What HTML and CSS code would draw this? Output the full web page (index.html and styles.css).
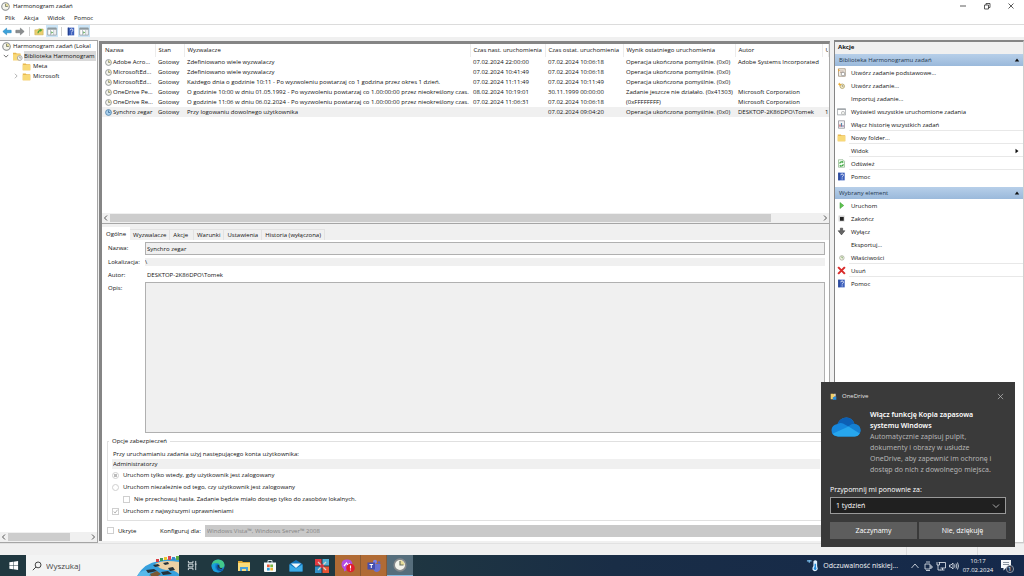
FILE: index.html
```html
<!DOCTYPE html>
<html lang="pl">
<head>
<meta charset="utf-8">
<title>Harmonogram zadań</title>
<link rel="stylesheet" href="styles.css">
</head>
<body>
<svg class="defs" aria-hidden="true">
  <symbol id="i-clock" viewBox="0 0 12 12"><circle cx="6" cy="6" r="5" fill="#f4f4ec" stroke="#85898c" stroke-width="1.4"/><path d="M6 6V2a4 4 0 0 1 4 4z" fill="#e6dc9a"/><path d="M6 2.500V6h3" fill="none" stroke="#66705f" stroke-width="1"/></symbol>
  <symbol id="i-clock-blue" viewBox="0 0 12 12"><circle cx="6" cy="6" r="5" fill="#a9d0ee" stroke="#4d7fa8" stroke-width="1.4"/><path d="M6 2.500V6h3" fill="none" stroke="#2b5f8c" stroke-width="1.2"/></symbol>
  <symbol id="i-folder" viewBox="0 0 12 12"><path d="M1 2h4l1 1h5v8H1z" fill="#e9b94d"/><path d="M1 4h10v7H1z" fill="#f8d978"/></symbol>
  <symbol id="i-folder-clock" viewBox="0 0 14 12"><path d="M1 1h4l1 1h5v9H1z" fill="#e9b94d"/><path d="M1 3h10v8H1z" fill="#f8d978"/><circle cx="10" cy="8" r="3.2" fill="#f4f4ee" stroke="#999"/><path d="M10 6v2h1.600" fill="none" stroke="#777" stroke-width=".8"/></symbol>
  <symbol id="i-help" viewBox="0 0 12 14"><path d="M1 1h10v12H1z" fill="#3c5fbc"/><path d="M1 1h2v12H1z" fill="#24408f"/><path d="M5 5q0-2 2-2t2 2q0 1-1 1.600T7 8.500M7 10v1.500" fill="none" stroke="#fff" stroke-width="1.3"/></symbol>
  <symbol id="i-panel" viewBox="0 0 14 12"><path d="M1 1h12v10H1z" fill="#fff" stroke="#8c9296"/><path d="M1 1h12v2.500H1z" fill="#8d999f"/><path d="M5 4v7M9.500 4v7" stroke="#9aa4aa"/><path d="m6 5.500 2.500 1.800L6 9z" fill="#4b9c43"/></symbol>
</svg>

<div class="window">
  <header class="titlebar">
    <svg class="ico"><use href="#i-clock"/></svg>
    <h1 class="title">Harmonogram zadań</h1>
    <div class="winbtns">
      <button aria-label="Minimalizuj"><svg viewBox="0 0 8 8"><path d="M1 4h6"/></svg></button>
      <button aria-label="Przywróć"><svg viewBox="0 0 8 8"><path d="M1.500 3h4v4h-4zM3 3V1.500h4v4H5.500"/></svg></button>
      <button aria-label="Zamknij"><svg viewBox="0 0 8 8"><path d="m1.500 1.500 5 5m0-5-5 5"/></svg></button>
    </div>
  </header>
  <nav class="menu">
    <button>Plik</button><button>Akcja</button><button>Widok</button><button>Pomoc</button>
  </nav>
  <div class="toolbar">
    <button aria-label="Wstecz"><svg viewBox="0 0 12 10"><path d="M1 5l4.500-4v2.500H11v3H5.500V9z" fill="#3aa2dc" stroke="#2382b8" stroke-width=".7"/></svg></button>
    <button aria-label="Dalej"><svg viewBox="0 0 12 10"><path d="M11 5 6.500 1v2.500H1v3h5.500V9z" fill="#8a8d8f" stroke="#6d7072" stroke-width=".7"/></svg></button>
    <span class="sep"></span>
    <button aria-label="W górę"><svg viewBox="0 0 12 10"><path d="M1 3h3l1-1h6v7H1z" fill="#ecd06f" stroke="#c3a444" stroke-width=".6"/><path d="M4 7q0-3 3-4L6.500 1.500 10 3 8 5.500 7.500 4.300Q6 5 5.500 7z" fill="#4fa43e"/></svg></button>
    <button class="on" aria-label="Drzewo konsoli"><svg><use href="#i-panel"/></svg></button>
    <span class="sep"></span>
    <button aria-label="Pomoc"><svg><use href="#i-help"/></svg></button>
    <button class="on" aria-label="Okienko akcji"><svg><use href="#i-panel"/></svg></button>
  </div>

  <main class="main">
    <aside class="tree">
      <ul class="nodes">
        <li class="node root"><svg class="ico"><use href="#i-clock"/></svg><span>Harmonogram zadań (Lokal</span></li>
        <li class="node lib"><svg class="chev" viewBox="0 0 8 8"><path d="m1 2.500 3 3 3-3"/></svg><svg class="ico"><use href="#i-folder-clock"/></svg><span class="picked">Biblioteka Harmonogram</span></li>
        <li class="node sub"><span class="chev"></span><svg class="ico"><use href="#i-folder"/></svg><span>Meta</span></li>
        <li class="node sub"><svg class="chev light" viewBox="0 0 8 8"><path d="m2.500 1 3 3-3 3"/></svg><svg class="ico"><use href="#i-folder"/></svg><span>Microsoft</span></li>
      </ul>
      <div class="hscroll"><svg viewBox="0 0 8 8"><path d="M5 1.500 2.500 4 5 6.500"/></svg><span class="track"><span class="thumb tree-thumb"></span></span><svg viewBox="0 0 8 8"><path d="M3 1.500 5.500 4 3 6.500"/></svg></div>
    </aside>

    <section class="center">
      <div class="list">
        <table class="tasks">
          <colgroup><col class="c-name"><col class="c-state"><col class="c-trig"><col class="c-next"><col class="c-last"><col class="c-res"><col class="c-auth"><col></colgroup>
          <thead><tr><th>Nazwa</th><th>Stan</th><th>Wyzwalacze</th><th>Czas nast. uruchomienia</th><th>Czas ostat. uruchomienia</th><th>Wynik ostatniego uruchomienia</th><th>Autor</th><th>U</th></tr></thead>
          <tbody>
            <tr><td><svg><use href="#i-clock"/></svg>Adobe Acro...</td><td>Gotowy</td><td>Zdefiniowano wiele wyzwalaczy</td><td>07.02.2024 22:00:00</td><td>07.02.2024 10:06:18</td><td>Operacja ukończona pomyślnie. (0x0)</td><td>Adobe Systems Incorporated</td><td></td></tr>
            <tr><td><svg><use href="#i-clock"/></svg>MicrosoftEd...</td><td>Gotowy</td><td>Zdefiniowano wiele wyzwalaczy</td><td>07.02.2024 10:41:49</td><td>07.02.2024 10:06:18</td><td>Operacja ukończona pomyślnie. (0x0)</td><td></td><td></td></tr>
            <tr><td><svg><use href="#i-clock"/></svg>MicrosoftEd...</td><td>Gotowy</td><td>Każdego dnia o godzinie 10:11 - Po wyzwoleniu powtarzaj co 1 godzina przez okres 1 dzień.</td><td>07.02.2024 11:11:49</td><td>07.02.2024 10:11:49</td><td>Operacja ukończona pomyślnie. (0x0)</td><td></td><td></td></tr>
            <tr><td><svg><use href="#i-clock"/></svg>OneDrive Pe...</td><td>Gotowy</td><td>O godzinie 10:00 w dniu 01.05.1992 - Po wyzwoleniu powtarzaj co 1.00:00:00 przez nieokreślony czas.</td><td>08.02.2024 10:19:01</td><td>30.11.1999 00:00:00</td><td>Zadanie jeszcze nie działało. (0x41303)</td><td>Microsoft Corporation</td><td></td></tr>
            <tr><td><svg><use href="#i-clock"/></svg>OneDrive Re...</td><td>Gotowy</td><td>O godzinie 11:06 w dniu 06.02.2024 - Po wyzwoleniu powtarzaj co 1.00:00:00 przez nieokreślony czas.</td><td>07.02.2024 11:06:31</td><td>07.02.2024 10:06:18</td><td>(0xFFFFFFFF)</td><td>Microsoft Corporation</td><td></td></tr>
            <tr class="sel"><td><svg><use href="#i-clock-blue"/></svg>Synchro zegar</td><td>Gotowy</td><td>Przy logowaniu dowolnego użytkownika</td><td></td><td>07.02.2024 09:04:20</td><td>Operacja ukończona pomyślnie. (0x0)</td><td>DESKTOP-2K86DPO\Tomek</td><td>1</td></tr>
          </tbody>
        </table>
        <div class="hscroll"><svg viewBox="0 0 8 8"><path d="M5 1.500 2.500 4 5 6.500"/></svg><span class="track"><span class="thumb list-thumb"></span></span><svg viewBox="0 0 8 8"><path d="M3 1.500 5.500 4 3 6.500"/></svg></div>
      </div>

      <div class="details">
        <div class="tabs" role="tablist">
          <button role="tab" class="tab active" aria-selected="true">Ogólne</button><button role="tab" class="tab">Wyzwalacze</button><button role="tab" class="tab wide">Akcje</button><button role="tab" class="tab">Warunki</button><button role="tab" class="tab">Ustawienia</button><button role="tab" class="tab">Historia (wyłączona)</button>
        </div>
        <form class="form">
          <div class="grid">
            <label for="name">Nazwa:</label><input id="name" class="boxed" value="Synchro zegar" readonly>
            <label for="loc">Lokalizacja:</label><input id="loc" class="strip" value="\" readonly>
            <label for="author">Autor:</label><input id="author" class="plain" value="DESKTOP-2K86DPO\Tomek" readonly>
            <label for="desc">Opis:</label><textarea id="desc" class="boxed desc" readonly></textarea>
          </div>
          <fieldset class="security">
            <legend>Opcje zabezpieczeń</legend>
            <label class="line" for="acct">Przy uruchamianiu zadania użyj następującego konta użytkownika:</label>
            <input id="acct" class="strip acct" value="Administratorzy" readonly>
            <label class="opt"><input type="radio" name="run" checked disabled>Uruchom tylko wtedy, gdy użytkownik jest zalogowany</label>
            <label class="opt"><input type="radio" name="run" disabled>Uruchom niezależnie od tego, czy użytkownik jest zalogowany</label>
            <label class="opt inset"><input type="checkbox" disabled>Nie przechowuj hasła. Zadanie będzie miało dostęp tylko do zasobów lokalnych.</label>
            <label class="opt"><span class="tick"><input type="checkbox" checked disabled><svg viewBox="0 0 8 8"><path d="m2 4 1.500 1.800L6.300 2"/></svg></span>Uruchom z najwyższymi uprawnieniami</label>
          </fieldset>
          <div class="config">
            <label class="opt hidden-opt"><input type="checkbox" disabled>Ukryte</label>
            <label for="cfg">Konfiguruj dla:</label>
            <select id="cfg" class="cfg" disabled><option>Windows Vista™, Windows Server™ 2008</option></select>
          </div>
        </form>
      </div>
    </section>

    <aside class="actions">
      <h2 class="actions-title">Akcje</h2>
      <button class="group">Biblioteka Harmonogramu zadań<svg viewBox="0 0 8 8"><path d="M1 6h6L4 2z"/></svg></button>
      <ul class="items">
        <li><button><svg viewBox="0 0 12 12"><path d="M2 1h9v10H2z" fill="#f3efe7" stroke="#9b8b76"/><path d="M4 4h5M4 6h5" stroke="#b59a88"/><circle cx="8" cy="8" r="2.500" fill="#fff" stroke="#888"/><path d="m1 1 3 2-2 2z" fill="#e5a33b"/></svg>Utwórz zadanie podstawowe...</button></li>
        <li><button><svg viewBox="0 0 12 12"><circle cx="7" cy="7" r="3" fill="#f5edc6" stroke="#a79a67"/><path d="M7 5.500V7h1.500" fill="none" stroke="#777"/><path d="m3 2 1 1.500L6 4 4.500 5.500 4 7 3 5.500 1.500 4.500z" fill="#edac31"/></svg>Utwórz zadanie...</button></li>
        <li><button><span class="blank"></span>Importuj zadanie...</button></li>
        <li><button><svg viewBox="0 0 12 12"><path d="M.5 2.500h11v8H.5z" fill="#fff" stroke="#969ca0"/><path d="M.5 3h11" stroke="#969ca0" stroke-width="1.500"/><circle cx="8" cy="8" r="2.200" fill="#edf0ed" stroke="#999" stroke-width=".7"/></svg>Wyświetl wszystkie uruchomione zadania</button></li>
        <li class="ruled"><button><svg viewBox="0 0 12 12"><path d="M2 1h8v10H2z" fill="#f2f2f4" stroke="#8f8c96"/><path d="M4 9V6" stroke="#c44" stroke-width="1.500"/><path d="M6 9V4" stroke="#58a" stroke-width="1.500"/><path d="M8 9V7" stroke="#84548a" stroke-width="1.500"/></svg>Włącz historię wszystkich zadań</button></li>
        <li class="ruled"><button><svg><use href="#i-folder"/></svg>Nowy folder...</button></li>
        <li class="ruled"><button><span class="blank"></span>Widok<svg class="more" viewBox="0 0 8 8"><path d="M2 1v6l4-3z"/></svg></button></li>
        <li class="ruled"><button><svg viewBox="0 0 12 12"><path d="M2 1h6l2 2v8H2z" fill="#f4fff2" stroke="#7aa578" stroke-width=".8"/><path d="M3.500 6q1-3 4-2M8.500 7q-1 3-4 2" fill="none" stroke="#38a13c" stroke-width="1.500"/><path d="m7 2 2 2-2 1.500zM5 7.500 3 9l2 1.800z" fill="#38a13c"/></svg>Odśwież</button></li>
        <li><button><svg><use href="#i-help"/></svg>Pomoc</button></li>
      </ul>
      <button class="group">Wybrany element<svg viewBox="0 0 8 8"><path d="M1 6h6L4 2z"/></svg></button>
      <ul class="items">
        <li><button><svg viewBox="0 0 12 12"><path d="M4 2v8l5-4z" fill="#62c552" stroke="#389b31" stroke-width=".7"/></svg>Uruchom</button></li>
        <li><button><svg viewBox="0 0 12 12"><path d="M2 2h8v8H2z" fill="#d5d5d5"/><path d="M4 4h5v5H4z" fill="#222"/></svg>Zakończ</button></li>
        <li><button><svg viewBox="0 0 12 12"><path d="M4.500 1.500h3V5h3L6 10.500 1.500 5h3z" fill="#666" stroke="#333" stroke-width=".7"/></svg>Wyłącz</button></li>
        <li><button><span class="blank"></span>Eksportuj...</button></li>
        <li class="ruled"><button><svg viewBox="0 0 12 12"><circle cx="6.500" cy="6.500" r="3" fill="#f7f8e8" stroke="#a1a596"/><path d="M6.500 4.500v2H8" fill="none" stroke="#6b9a56"/></svg>Właściwości</button></li>
        <li class="ruled"><button><svg viewBox="0 0 12 12"><path d="M1.500 1.500 10.500 10.500M10.500 1.500l-9 9" stroke="#d92b2b" stroke-width="2.800"/></svg>Usuń</button></li>
        <li><button><svg><use href="#i-help"/></svg>Pomoc</button></li>
      </ul>
    </aside>
  </main>
  <div class="status"><span></span><span></span><span></span></div>

  <footer class="taskbar">
    <button class="tb" aria-label="Start"><svg viewBox="0 0 12 12"><path d="M1.500 2.500 5.500 2v3.700h-4zM6 1.900l5-.7v4.500H6zM1.500 6.200h4V10l-4-.5zM6 6.200h5v4.600l-5-.7z" fill="#fff"/></svg></button>
    <label class="search">
      <svg class="lens" viewBox="0 0 12 12"><circle cx="7.300" cy="4.700" r="3.500"/><path d="M4.800 7.200 1 11"/></svg>
      <input type="text" placeholder="Wyszukaj" aria-label="Wyszukaj">
      <svg class="art" viewBox="0 0 42 20"><path d="M0 20Q7 7 22 5l10-2 10-1v18z" fill="#37a0dd"/><path d="M18 8q8-5 24-2v12q-6-5-13-4-7-1-11-6z" fill="#ecd1a5"/><path d="M2 17q7-5 12-2l-2 5H1z" fill="#58b9ea"/><path d="M9 14l8-1 3 2-9 2zM16 9l5-1 2 2-5 1zM26 7l5-1 1 2-4 1zM31 12l5-1 2 3-5 1zM24 16l7-1 4 3-9 1z" fill="#25323a"/><path d="M13 18l7-3 4 3-3 2h-7z" fill="#795934"/><path d="M19 6h3V3h-3z" fill="#d83c42"/><path d="M23 5h3V2h-3z" fill="#3b9b57"/><path d="M27 4h3V1h-3z" fill="#ecc42f"/><path d="M31 4h3V0h-3z" fill="#d94755"/><path d="M35 4h3V1h-3z" fill="#3587cc"/><path d="M39 4h3V0h-3z" fill="#5dad42"/></svg>
    </label>
    <button class="tb" aria-label="Widok zadań"><svg viewBox="0 0 12 12" fill="none" stroke="#dce4e6"><path d="M1.500 1v2h5V1M1.500 4.500h5v3h-5zM1.500 11V9h5v2M9.500 1v10M8.500 4.500h2"/></svg></button>
    <button class="tb" aria-label="Edge"><svg class="big" viewBox="0 0 14 14"><circle cx="7" cy="7" r="6.500" fill="#1683d0"/><path d="M.6 6.500Q1.500.5 7.200.5q6 .3 6.300 5.500 0 3-3.500 3-2 0-1.600-1.300Q9.500 4.700 6 4.300 2 4.200.6 6.500z" fill="#42c98b"/><path d="M.6 6.500Q2 4 5.500 4.300 3.500 6 4 8.500 5 12.300 9 13 1 14.500.6 6.500z" fill="#1aa1dc"/><path d="M5.500 7Q5 11.500 9.500 12q2 0 3.300-1.700-6 1.500-4.800-2.600Q8 5.500 6.500 5.500q-.8.500-1 1.500z" fill="#0d4e99"/><path d="M7 6q2 0 1.500 2 .3 1.300 3 .8l-1 1.400Q6.500 10 7 6z" fill="#1f3339"/></svg></button>
    <button class="tb" aria-label="Eksplorator plików"><svg class="big" viewBox="0 0 14 14"><path d="M1 2h4l1 1h7v9H1z" fill="#e5ac35"/><path d="M1 4h12v8H1z" fill="#fbdc7b"/><path d="M3 8h8v4H9V10H5v2H3z" fill="#4aa0d8"/></svg></button>
    <button class="tb" aria-label="Sklep"><svg class="big" viewBox="0 0 14 14"><path d="M5 4V1.500h4V4" fill="none" stroke="#d5e2e8"/><path d="M1 3.500h12V12q0 1-1 1H2q-1 0-1-1z" fill="#f6fafb"/><path d="M4 5.500h2.700v2.700H4z" fill="#eb5936"/><path d="M7.300 5.500H10v2.700H7.300z" fill="#77b943"/><path d="M4 8.800h2.700v2.700H4z" fill="#329fd9"/><path d="M7.300 8.800H10v2.700H7.300z" fill="#f0b735"/></svg></button>
    <button class="tb" aria-label="Poczta"><svg class="big" viewBox="0 0 14 14"><path d="M.5 5 7 1l6.500 4v7.500H.5z" fill="#1476bd"/><path d="M2 4.500h10L7 9z" fill="#f1f8fc"/><path d="M.5 5.500 7 9.500l6.500-4v7H.5z" fill="#3cace8"/></svg></button>
    <button class="tb" aria-label="Program"><svg class="big" viewBox="0 0 14 14"><path d="M0 0h6.500v6.500H0z" fill="#e2393f"/><path d="M7.500 0H14v6.500H7.500z" fill="#51aed3"/><path d="M0 7.500h6.500V14H0z" fill="#328fc8"/><path d="M7.500 7.500H14V14H7.500z" fill="#e95434"/><path d="m3 3 8 8M11 3l-8 8" stroke="#d9d6ca" stroke-width="1.200"/><circle cx="7" cy="7" r="2" fill="#cc3440"/></svg></button>
    <button class="tb orange" aria-label="Messenger"><svg class="big" viewBox="0 0 14 14"><path d="M6 .5q5.500 0 5.500 5.300T6 11l-3 1.500v-2.300Q.5 9 .5 5.800.500.5 6 .5z" fill="#b44de4"/><path d="m3 7 2.500-3L7 6l2-1.500" fill="none" stroke="#fff" stroke-width="1.200"/><circle cx="9.500" cy="9" r="4.300" fill="#e21e2f"/><path d="M9.500 6.500v3M9.500 10.500v1" stroke="#fff" stroke-width="1.100"/></svg></button>
    <button class="tb orange" aria-label="Teams"><svg class="big" viewBox="0 0 14 14"><circle cx="8" cy="2.700" r="2" fill="#7b83eb"/><circle cx="12" cy="3.500" r="1.300" fill="#5961c3"/><path d="M6 5h7.500v4q-.5 3.500-3.500 4-3.500 0-4-4z" fill="#6971d2"/><path d="M.5 3.500H8v7H.5z" fill="#444db0"/><path d="M2.500 5.500h3.600M4.300 5.500V9" stroke="#fff"/></svg></button>
    <button class="tb current" aria-label="Harmonogram zadań"><svg class="big"><use href="#i-clock"/></svg></button>
    <div class="tray">
      <button class="weather"><svg viewBox="0 0 14 14"><path d="M1 2h5M3.500 1v3" stroke="#79bceb" stroke-width="1.300"/><path d="M8 2.500q2-2.500 4 0v5q1.500 3-.5 5-3 1.500-4.500-1-.5-2 1-4z" fill="#dcefff"/><path d="M9.200 5h1.600v3.500q1.400 2-.3 3.300-2.500.2-2.300-2l1-1.300z" fill="#238bdc"/></svg>Odczuwalność niskiej...</button>
      <button aria-label="Ukryte ikony"><svg viewBox="0 0 10 10"><path d="m1.500 7 3.500-4 3.500 4"/></svg></button>
      <button aria-label="Kamera"><svg viewBox="0 0 10 10"><path d="M3 1h4M2 3h5v5H2zM7 5h2v2H7M3 9.500h4"/></svg></button>
      <button aria-label="Sieć"><svg viewBox="0 0 10 10"><path d="M2.500 1.500H9.500V7h-5M1 1v3h2.500V1M2 4v5h3M6.500 7v2M4.500 9h4"/></svg></button>
      <button aria-label="Głośność"><svg viewBox="0 0 10 10"><path d="M.5 4H2l2-2v6L2 6H.5zM5.500 3.500q1 1.500 0 3M7 2.500q1.700 2.500 0 5M8.500 1.500q2 3.500 0 7" stroke-width=".8"/></svg></button>
      <button class="time"><span>10:17</span><span>07.02.2024</span></button>
      <button class="note" aria-label="Powiadomienia"><svg viewBox="0 0 14 14"><path d="M1 1h10v8H6l-2.500 2.500V9H1z" fill="#f5f7fa" stroke="none"/><path d="M3 3.500h6M3 5.500h6" stroke="#6c7889" stroke-width=".8"/><circle cx="10" cy="10" r="3.600" fill="#26324b" stroke="#a4adb9" stroke-width=".8"/></svg><span class="count">1</span></button>
    </div>
  </footer>
</div>

<section class="toast" aria-label="OneDrive">
  <div class="toast-head"><svg viewBox="0 0 10 10"><path d="M1 1h4l1 1v7H1z" fill="#f2cf69"/><path d="M4 6l5-1v4.500H4z" fill="#2c8cd9"/><path d="M6 1h2v4H6z" fill="#f7f1de"/></svg><span>OneDrive</span><button aria-label="Zamknij"><svg viewBox="0 0 8 8"><path d="m1 1 6 6m0-6-6 6"/></svg></button></div>
  <div class="toast-body">
    <svg class="cloud" viewBox="0 0 30 20"><path d="M7 19.500Q.5 19 .5 13 .8 8 6.500 7 9 .5 15.500.5q6 .3 8 6.500 6 .8 6 6.500-.4 5.500-6 6z" fill="#1687dc"/><path d="M6.500 7Q9 .5 15.500.5q6 .3 8 6.500-3.500-.3-6 2.500L12 6.500Q9.500 5.500 6.500 7z" fill="#0c5fb4"/><path d="M17.500 9.500q2.500-2.800 6-2.500 6 .8 6 6.500 0 1.500-.8 3z" fill="#1580d2"/><path d="M7 19.500Q3 19 1.500 16.800L17.500 9.500l11.200 7q-1.500 3-5.200 3z" fill="#27a6ed"/></svg>
    <div class="copy"><h2>Włącz funkcję Kopia zapasowa systemu Windows</h2><p>Automatycznie zapisuj pulpit, dokumenty i obrazy w usłudze OneDrive, aby zapewnić im ochronę i dostęp do nich z dowolnego miejsca.</p></div>
  </div>
  <label class="remind" for="remind">Przypomnij mi ponownie za:</label>
  <div class="pick"><select id="remind"><option>1 tydzień</option></select><svg viewBox="0 0 8 8"><path d="m1 2.500 3 3 3-3"/></svg></div>
  <div class="toast-btns"><button>Zaczynamy</button><button>Nie, dziękuję</button></div>
</section>
</body>
</html>
```

FILE: styles.css
```css
* { box-sizing: border-box; }
body { margin: 0; font: 6px/10px "Open Sans", "Noto Sans", sans-serif; color: #111; background: #f0f0f0; overflow: hidden; }
button, input, select, textarea { font: inherit; color: inherit; border: 0; margin: 0; padding: 0; background: none; border-radius: 0; appearance: none; outline: 0; min-width: 0; text-align: left; }
button { display: flex; align-items: center; white-space: nowrap; }
ul { list-style: none; margin: 0; padding: 0; }
h1, h2, p { margin: 0; font-size: inherit; }
svg { flex: none; display: block; }
.defs { position: absolute; width: 0; height: 0; }
.window { display: flex; flex-direction: column; height: 100vh; }

.titlebar { display: flex; align-items: center; height: 12px; padding-left: 1px; gap: 3px; background: #fff; flex: none; }
.titlebar .ico { width: 9px; height: 9px; }
.title { font-weight: 400; }
.winbtns { display: flex; margin-left: auto; gap: 16px; padding-right: 9px; }
.winbtns svg { width: 8px; height: 8px; fill: none; stroke: #333; stroke-width: .8; }
.menu { display: flex; height: 13px; gap: 9px; padding-left: 5px; background: #fff; border-bottom: 1px solid #dcdcdc; flex: none; }
.toolbar { display: flex; align-items: center; height: 12px; gap: 1px; padding-left: 1px; background: #fff; flex: none; }
.toolbar button { width: 12px; height: 12px; justify-content: center; }
.toolbar svg { width: 10px; height: 9px; }
.toolbar .on { background: #cce5f7; }
.sep { width: 1px; height: 9px; margin: 0 2px; background: #cfcfcf; }

.main { display: flex; flex: 1; min-height: 0; padding-top: 3px; }
.tree { display: flex; flex-direction: column; width: 98px; flex: none; background: #fff; border: 1px solid #a5a5a5; border-left: 0; }
.nodes { flex: 1; padding-right: 1px; overflow: hidden; }
.node { display: flex; align-items: center; height: 10px; white-space: nowrap; }
.node .ico { width: 9px; height: 9px; margin-right: 2px; }
.root { padding-left: 2px; }
.lib { padding-left: 3px; }
.lib .ico { width: 11px; margin-right: 1px; }
.sub { padding-left: 13px; }
.chev { width: 6px; height: 6px; margin-right: 3px; fill: none; stroke: #444; flex: none; }
.chev.light { stroke: #999; }
.picked { flex: 1; background: #d9d9d9; }
.hscroll { display: flex; align-items: center; height: 10px; background: #f0f0f0; flex: none; }
.hscroll > svg { width: 8px; height: 8px; fill: none; stroke: #555; stroke-width: 1; }
.track { flex: 1; align-self: stretch; padding: 1px 0; }
.thumb { display: block; height: 100%; background: #cdcdcd; }
.tree-thumb { width: 76%; }
.list-thumb { width: 93%; }

.center { display: flex; flex-direction: column; flex: 1; min-width: 0; margin: 1px 4px 2px 1px; border: solid #858585; border-width: 3px 1px 0 3px; border-right-color: #a9a9a9; background: #f0f0f0; }
.list { display: flex; flex-direction: column; height: 180px; background: #fff; flex: none; border-bottom: 1px solid #a5a5a5; }
.tasks { width: 100%; table-layout: fixed; border-collapse: collapse; margin-bottom: auto; }
.c-name { width: 53px; }
.c-state { width: 29px; }
.c-trig { width: 286px; }
.c-next { width: 75px; }
.c-last { width: 78px; }
.c-res { width: 112px; }
.c-auth { width: 87px; }
.tasks th, .tasks td { height: 10px; padding: 0 0 0 3px; text-align: left; font-weight: 400; white-space: nowrap; overflow: hidden; }
.tasks th { height: 13px; padding-bottom: 2px; border-right: 1px solid #ececec; }
.tasks td svg { display: inline-block; width: 7px; height: 7px; margin-right: 1px; vertical-align: middle; }
.sel { background: #f0f0f0; }

.details { display: flex; flex-direction: column; flex: 1; min-height: 0; margin-top: 3px; }
.tabs { display: flex; align-items: flex-end; height: 13px; flex: none; }
.tab { height: 11px; padding: 0 3px; border: solid #e2e2e2; border-width: 1px 1px 0 0; }
.tab.active { height: 13px; padding-left: 4px; background: #fff; border-color: #fff; }
.tab.wide { padding-right: 5px; }
.form { flex: 1; padding: 2px 4px 2px 5px; background: #fff; }
.grid { display: grid; grid-template-columns: 38px 1fr; row-gap: 1px; }
.grid label { padding-left: 1px; line-height: 12px; }
.boxed { height: 13px; padding: 0 1px; background: #f0f0f0; border: 1px solid #b0b0b0; }
.desc { height: 151px; resize: none; display: block; }
.strip { height: 8px; background: #f0f0f0; align-self: center; }
.plain { height: 12px; padding-left: 2px; }
.security { margin: 3px 0 0; padding: 3px 4px; border: 1px solid #e0e0e0; display: flex; flex-direction: column; min-width: 0; }
.security legend { margin-left: -3px; padding: 0 3px; line-height: 10px; }
.line { padding-left: 1px; }
.acct { height: 10px; padding-left: 1px; align-self: stretch; }
.opt { display: flex; align-items: center; gap: 4px; height: 12px; }
.opt input { width: 7px; height: 7px; border: 1px solid #cfcfcf; background: #fff; flex: none; }
.opt input[type="radio"] { border-radius: 50%; }
.opt input[type="radio"]:checked { background: radial-gradient(#bbb 45%, #fff 55%); }
.tick { display: grid; }
.tick > * { grid-area: 1 / 1; }
.tick svg { width: 7px; height: 7px; fill: none; stroke: #aaa; z-index: 1; }
.opt.inset { padding-left: 11px; }
.config { display: flex; align-items: center; height: 13px; margin-top: 3px; }
.hidden-opt { width: 53px; }
.cfg { flex: 1; height: 12px; margin-left: 4px; padding-left: 2px; background: #c9c9c9; color: #858585; opacity: 1; }

.actions { width: 190px; flex: none; background: #fff; border: solid #858585; border-width: 2px 1px 1px; border-right-color: #d0d0d0; border-bottom-color: #c8c8c8; }
.actions-title { height: 12px; padding-left: 3px; background: #f0f0f0; }
.group { width: 100%; height: 12px; padding: 0 3px 0 4px; justify-content: space-between; background: linear-gradient(#b7cfe9, #9ab9db); color: #24374f; }
.group svg, .more { width: 6px; height: 6px; fill: #111; }
.items { margin-bottom: 4px; }
.group + .items li { padding-left: 2px; }
.items button { width: 100%; height: 13px; gap: 5px; padding-right: 3px; }
.items li button > svg:first-child, .blank { width: 9px; height: 9px; }
.ruled { background: linear-gradient(#e8e8e8, #e8e8e8) right bottom / 174px 1px no-repeat; }
.more { margin-left: auto; }
.status { display: flex; height: 12px; border-top: 1px solid #e2e2e2; flex: none; }
.status span { flex: 0 0 71px; border-right: 1px solid #dcdcdc; }
.status span:first-child { flex: 1; }
.status span:last-child { flex: 0 0 46px; border: 0; }

.taskbar { display: flex; height: 21px; flex: none; color: #f4f6f8; background: linear-gradient(90deg, #203840, #203840 35%, #192d46 60%, #15294b); }
.tb { width: 26px; justify-content: center; flex: none; }
.tb svg { width: 11px; height: 11px; }
.tb .big { width: 14px; height: 14px; }
.orange { background: #b06b35; border-right: 1px solid #8a5933; }
.current { background: #566e7c; border-bottom: 1px solid #83b9e0; }
.search { display: flex; align-items: center; width: 153px; flex: none; background: #f3f4f4; padding-left: 6px; gap: 4px; }
.lens { width: 10px; height: 10px; fill: none; stroke: #333; stroke-width: 1.1; }
.search input { flex: 1; font-size: 8px; color: #444; }
.search input::placeholder { color: #444; opacity: 1; }
.art { width: 42px; height: 20px; align-self: flex-end; }
.tray { display: flex; margin-left: auto; }
.tray button { width: 13px; justify-content: center; }
.tray button svg { width: 10px; height: 10px; fill: none; stroke: #e8edf3; stroke-width: .8; }
.tray .weather { width: auto; font-size: 7px; gap: 4px; margin-right: 10px; }
.tray .weather svg { width: 13px; height: 13px; stroke: none; }
.tray .time { flex-direction: column; width: 36px; line-height: 9px; }
.tray .note { position: relative; width: 22px; margin-right: 6px; }
.tray .note svg { width: 14px; height: 14px; }
.count { position: absolute; left: 12px; top: 9px; }

.toast { position: absolute; right: 9px; bottom: 29px; width: 194px; padding: 9px 9px 8px; color: #fff; background: #3a3a3a; }
.toast-head { display: flex; align-items: center; gap: 5px; height: 10px; color: #e3e3e3; }
.toast-head > svg { width: 7px; height: 7px; }
.toast-head button { margin-left: auto; padding-right: 2px; }
.toast-head button svg { width: 7px; height: 7px; fill: none; stroke: #bbb; stroke-width: .8; }
.toast-body { display: flex; gap: 9px; margin-top: 8px; }
.cloud { width: 30px; height: 20px; margin: 8px 0 0 1px; }
.copy { padding-right: 2px; font: 7px/11px "Noto Sans", "Open Sans", sans-serif; color: #b4b4b4; }
.copy h2 { padding-right: 12px; font-weight: 600; color: #fff; }
.remind { display: block; margin-top: 10px; font-size: 7px; line-height: 10px; }
.pick { display: flex; align-items: center; height: 17px; margin-top: 2px; padding: 0 5px; background: #202020; border: 1px solid #999; font-size: 7px; }
.pick select { flex: 1; color: #fff; }
.pick svg { width: 8px; height: 8px; fill: none; stroke: #ccc; stroke-width: .8; }
.toast-btns { display: grid; grid-template-columns: 1fr 1fr; gap: 2px; margin-top: 8px; }
.toast-btns button { height: 17px; justify-content: center; background: #5d5d5d; font-size: 7px; }
```
